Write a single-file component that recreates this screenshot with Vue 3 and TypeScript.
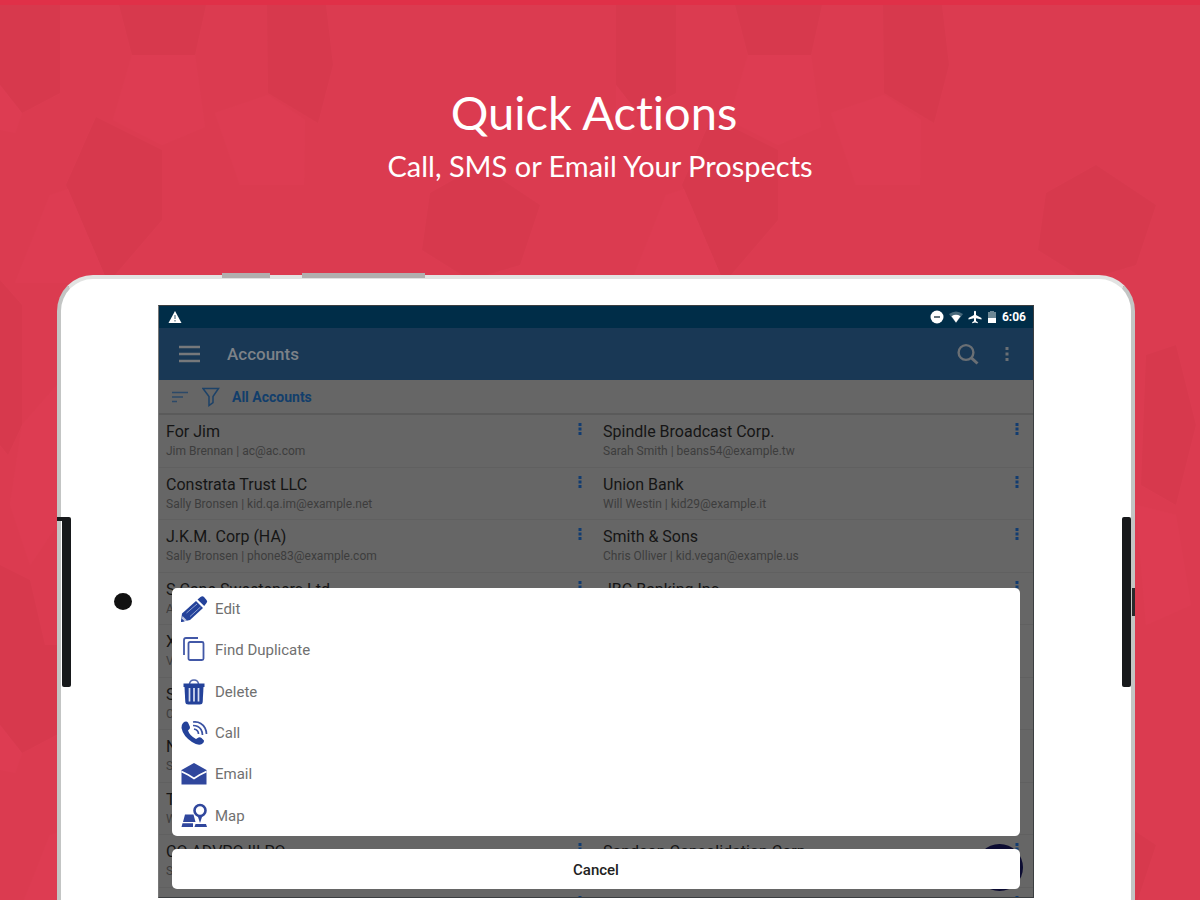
<script setup lang="ts">
import { ref } from 'vue'

interface Account {
  name: string
  detail: string
}

interface Action {
  id: string
  label: string
}

const accounts: Account[] = [
  { name: 'For Jim', detail: 'Jim Brennan | ac@ac.com' },
  { name: 'Spindle Broadcast Corp.', detail: 'Sarah Smith | beans54@example.tw' },
  { name: 'Constrata Trust LLC', detail: 'Sally Bronsen | kid.qa.im@example.net' },
  { name: 'Union Bank', detail: 'Will Westin | kid29@example.it' },
  { name: 'J.K.M. Corp (HA)', detail: 'Sally Bronsen | phone83@example.com' },
  { name: 'Smith & Sons', detail: 'Chris Olliver | kid.vegan@example.us' },
  { name: 'S Cane Sweeteners Ltd', detail: 'A' },
  { name: 'JBC Banking Inc', detail: '' },
  { name: 'X', detail: 'V' },
  { name: '', detail: '' },
  { name: 'S', detail: 'C' },
  { name: '', detail: '' },
  { name: 'N', detail: 'S' },
  { name: '', detail: '' },
  { name: 'T', detail: 'W' },
  { name: '', detail: '' },
  { name: 'CO ADVPO III PO', detail: 'S' },
  { name: 'Sandeon Consolidation Corp.', detail: '' },
  { name: 'Jungle Systems Incorporated', detail: '' },
  { name: 'Smith & Sons', detail: '' },
]

const actions: Action[] = [
  { id: 'edit', label: 'Edit' },
  { id: 'duplicate', label: 'Find Duplicate' },
  { id: 'delete', label: 'Delete' },
  { id: 'call', label: 'Call' },
  { id: 'email', label: 'Email' },
  { id: 'map', label: 'Map' },
]

const sheetOpen = ref(true)
</script>

<template>
  <main class="promo">
    <svg class="facets" aria-hidden="true">
      <defs>
        <pattern id="facet" width="616" height="640" patternUnits="userSpaceOnUse">
          <g fill="#d7394d">
            <path d="M0 0H60V88L22 108L0 80Z" />
            <path d="M119 0H206L195 50H132Z" />
            <path d="M267 0H326L333 60L318 118L268 88Z" />
            <path d="M96 112L162 145V215L108 278L66 180Z" />
            <path d="M430 188L480 160L540 200L520 260L470 275L422 245Z" />
            <path d="M0 275L22 300V420L8 450L0 440Z" />
            <path d="M530 350L560 340L580 420L560 500L525 480Z" />
            <path d="M0 560L30 575L45 640H0Z" />
          </g>
          <g fill="#dd3c52">
            <path d="M0 80L22 108L15 128L0 125Z" />
            <path d="M132 50H195L205 122L162 140L113 115Z" />
            <path d="M215 108L268 90L305 115L304 180H240Z" />
            <path d="M50 190L68 184L108 278L15 278Z" />
            <path d="M22 420L57 380V520L30 560L10 500Z" />
            <path d="M520 500L560 510L575 600L530 620Z" />
          </g>
        </pattern>
      </defs>
      <rect width="100%" height="100%" fill="url(#facet)" />
    </svg>

    <header class="hero">
      <h1>Quick Actions</h1>
      <p>Call, SMS or Email Your Prospects</p>
    </header>

    <section class="tablet">
      <span class="key key-short"></span>
      <span class="key key-long"></span>
      <span class="speaker speaker-left"></span>
      <span class="speaker speaker-right"></span>
      <span class="port"></span>
      <span class="camera"></span>

      <div class="screen">
        <div class="status">
          <svg width="14" height="14" viewBox="0 0 14 14"><path d="M7 1L13.500 13H.5Z" fill="#fff" /><path d="M7 5v4M7 10v1.500" stroke="#68808f" stroke-width="1.300" /></svg>
          <span class="spacer"></span>
          <svg width="14" height="14" viewBox="0 0 14 14"><circle cx="7" cy="7" r="6.500" fill="#fff" /><path d="M4 7h6" stroke="#53646f" stroke-width="1.800" /></svg>
          <svg width="14" height="14" viewBox="0 0 14 14"><path d="M0 4Q7-1 14 4L7 13Z" fill="#49697b" /><path d="M2.500 6.200Q7 3.500 11.500 6.200L7 12.500Z" fill="#fff" /></svg>
          <svg width="14" height="14" viewBox="0 0 14 14"><path d="M6 1.500Q7 0 8 1.500V5L13.500 8v1.500L8 8.300V11l1.800 1.200v1L7 12.500l-2.800.7v-1L6 11V8.300L.5 9.500V8L6 5Z" fill="#fff" /></svg>
          <svg width="10" height="14" viewBox="0 0 10 14"><path d="M1 2h2V1h4v1h2v6H1Z" fill="#6d8895" /><path d="M1 8h8v5H1Z" fill="#fff" /></svg>
          <time>6:06</time>
        </div>

        <div class="toolbar">
          <button type="button" class="icon-button menu" aria-label="Menu">
            <svg width="22" height="20" viewBox="0 0 22 20"><path d="M0 3h21M0 10h21M0 17h21" stroke="#76787b" stroke-width="2.600" /></svg>
          </button>
          <h2>Accounts</h2>
          <span class="spacer"></span>
          <button type="button" class="icon-button" aria-label="Search">
            <svg width="22" height="22" viewBox="0 0 22 22" fill="none" stroke="#6a6f74"><circle cx="9" cy="9.500" r="7.400" stroke-width="2.400" /><path d="M14.300 14.800L20.500 20.500" stroke-width="3" /></svg>
          </button>
          <button type="button" class="icon-button more" aria-label="More">
            <svg width="4" height="16" viewBox="0 0 4 16" fill="#6a6f74"><path d="M.5 1h3v3h-3zM.5 6.500h3v3h-3zM.5 12h3v3h-3z" /></svg>
          </button>
        </div>

        <div class="filter">
          <button type="button" class="icon-button" aria-label="Sort">
            <svg width="16" height="12" viewBox="0 0 16 12" stroke="#2c4968" stroke-width="1.500"><path d="M0 1.500h16M0 6h11M0 10.500h5" /></svg>
          </button>
          <button type="button" class="icon-button" aria-label="Filter">
            <svg width="18" height="20" viewBox="0 0 18 20" fill="none" stroke="#1d4268" stroke-width="1.500"><path d="M1 1.500h15.500L11 9.500v6L7 18.500v-9Z" /></svg>
          </button>
          <a href="#accounts">All Accounts</a>
        </div>

        <div class="list-view">
          <ul id="accounts" class="accounts">
            <li v-for="(account, i) in accounts" :key="i">
              <div class="text">
                <strong>{{ account.name }}</strong>
                <span>{{ account.detail }}</span>
              </div>
              <button type="button" class="icon-button" aria-label="Account actions">
                <svg width="4" height="14" viewBox="0 0 4 14" fill="#123c70"><path d="M.5 1h3v3h-3zM.5 5.500h3v3h-3zM.5 10h3v3h-3z" /></svg>
              </button>
            </li>
          </ul>
        </div>

        <button type="button" class="fab" aria-label="Add account"></button>

        <div v-if="sheetOpen" class="sheet">
          <ul class="actions">
            <li v-for="action in actions" :key="action.id">
              <button type="button">
                <svg v-if="action.id === 'edit'" width="28" height="28" viewBox="0 0 28 28">
                  <path d="M1 27L2 18.500L16 6L23 13L10 25Z" fill="#24429a" />
                  <path d="M17.500 4.500L20.500 2Q22.500 .5 24 2L26.500 5Q28 6.500 26.500 8L24.200 11Z" fill="#24429a" />
                  <path d="M6.500 18L17 9M10 21.500L20.500 12" stroke="#91a2d1" stroke-width="1" />
                  <path d="M2.500 21L7 25.500L4 26.200L1.800 24.200Z" fill="#fff" opacity=".7" />
                  <path d="M1 27l.6-3.500L4.500 26.300Z" fill="#24429a" />
                </svg>
                <svg v-else-if="action.id === 'duplicate'" width="28" height="28" viewBox="0 0 28 28" fill="none" stroke="#4258a7" stroke-width="1.800">
                  <path d="M4 19V4Q4 2 6 2H18" />
                  <rect x="8.500" y="6" width="15" height="18" rx="1.500" />
                </svg>
                <svg v-else-if="action.id === 'delete'" width="28" height="28" viewBox="0 0 28 28">
                  <path d="M9.500 6Q10 2 14 2T18.500 6" fill="none" stroke="#5267ac" stroke-width="1.600" />
                  <path d="M3.500 5.500h21v3.500h-21z" fill="#24429a" />
                  <path d="M4.500 9h19L22.700 24q-.2 2.500-3 2.500H8.300q-2.800 0-3-2.500Z" fill="#24429a" />
                  <path d="M9.500 10v13.500M14 10v13.500M18.500 10v13.500" stroke="#d7def1" stroke-width="1.700" />
                </svg>
                <svg v-else-if="action.id === 'call'" width="28" height="28" viewBox="0 0 28 28">
                  <path d="M3 4Q6 1.500 8 3.500L10 8Q10.500 9.500 8 11.500Q9.500 16.500 16 20L18.500 18.500Q20 17.700 21.500 19L24 21.500Q24.500 23 22 25Q18 27 12 23Q3 17 1.500 9Q1.200 6 3 4Z" fill="#24429a" />
                  <path d="M13 3Q21 2 25 9Q26.500 12 26.500 15M13 6.500Q18.500 6.500 21 10.500Q22.500 13 22.500 16M14 10Q18.500 11 18.500 15" fill="none" stroke="#3b53a3" stroke-width="1.700" />
                </svg>
                <svg v-else-if="action.id === 'email'" width="28" height="28" viewBox="0 0 28 28">
                  <path d="M1.500 10L14 3L26.500 10V24.500H1.500Z" fill="#30479d" />
                  <path d="M1.500 11.500L8.500 15L14 18.500L19.500 15L26.500 11.500" fill="none" stroke="#fff" stroke-width="1.700" />
                </svg>
                <svg v-else width="28" height="28" viewBox="0 0 28 28">
                  <path d="M5 12.500h8.500l2 7.500H3ZM2.500 21.200h10.500v3.800H1.500Z" fill="#30479d" />
                  <path d="M15.500 22h10.500l1 3H14.500Z" fill="#30479d" />
                  <circle cx="20" cy="8.500" r="5.500" fill="#fff" stroke="#30479d" stroke-width="2.600" />
                  <path d="M17.500 13.500h5L20 21Z" fill="#30479d" />
                </svg>
                <span>{{ action.label }}</span>
              </button>
            </li>
          </ul>
          <button type="button" class="cancel" @click="sheetOpen = false">Cancel</button>
        </div>
      </div>
    </section>
  </main>
</template>

<style>
body {
  margin: 0;
}
</style>

<style scoped>
.promo {
  position: relative;
  display: flex;
  flex-direction: column;
  min-height: 100vh;
  box-sizing: border-box;
  border-top: 5px solid #e03048;
  background: #db3b50;
  font-family: Roboto, "Liberation Sans", sans-serif;
  overflow: hidden;
}

.facets {
  position: absolute;
  inset: 0;
  width: 100%;
  height: 100%;
}

.hero {
  position: relative;
  box-sizing: border-box;
  height: 270px;
  padding-top: 77px;
  color: #fff;
  font-family: Lato, "Open Sans", sans-serif;
  font-variant-ligatures: none;
  text-align: center;
}

.hero h1 {
  margin: 0 12px 0 0;
  font-size: 47px;
  font-weight: 400;
  line-height: 60px;
}

.hero p {
  margin: 4px 0 0;
  font-size: 29px;
  line-height: 40px;
}

.tablet {
  position: relative;
  flex: 1;
  display: flex;
  margin: 0 65px 0 57px;
  padding: 26px 97px 2px;
  border: 4px solid #c3c5c4;
  border-top: 4px solid #e2e3e2;
  border-bottom: 0;
  border-radius: 36px 36px 0 0;
  background: #fff;
}

.key {
  position: absolute;
  top: -6px;
  height: 5px;
  background: #b1afae;
}

.key-short {
  left: 161px;
  width: 48px;
}

.key-long {
  left: 241px;
  width: 123px;
}

.speaker {
  position: absolute;
  top: 238px;
  width: 9px;
  height: 170px;
  border-radius: 2px;
  background: #17191b;
}

.speaker-left {
  left: 1px;
}

.speaker-left::before {
  content: "";
  position: absolute;
  left: -5px;
  width: 8px;
  height: 4px;
  background: #17191b;
}

.speaker-right {
  right: 0;
}

.port {
  position: absolute;
  top: 309px;
  right: -4px;
  width: 3px;
  height: 28px;
  background: #292a2c;
}

.camera {
  position: absolute;
  top: 314px;
  left: 53px;
  width: 18px;
  height: 17px;
  border-radius: 50%;
  background: #111;
}

.screen {
  position: relative;
  flex: 1;
  display: flex;
  flex-direction: column;
  box-sizing: border-box;
  border: 1px solid #3b3e40;
  border-left-color: #777;
  background: #666;
  overflow: hidden;
}

.status {
  display: flex;
  align-items: center;
  gap: 5px;
  height: 22px;
  padding: 0 7px 0 9px;
  background: #002d48;
  color: #fff;
  font-size: 12px;
  font-weight: 700;
}

.spacer {
  flex: 1;
}

.toolbar {
  display: flex;
  align-items: center;
  height: 52px;
  padding: 0 24px 0 20px;
  background: #193855;
}

.toolbar h2 {
  margin: 0 0 0 26px;
  color: #7d8288;
  font-size: 17px;
  font-weight: 500;
}

.toolbar .more {
  margin-left: 26px;
}

.icon-button {
  display: flex;
  padding: 0;
  border: 0;
  background: none;
}

.filter {
  display: flex;
  align-items: center;
  height: 33px;
  padding-left: 13px;
  border-bottom: 2px solid #5a5a5a;
}

.filter .icon-button + .icon-button {
  margin-left: 14px;
}

.filter a {
  margin-left: 12px;
  color: #123e6b;
  font-size: 14px;
  font-weight: 700;
  text-decoration: none;
}

.list-view {
  flex: 1 0 0;
  overflow: hidden;
}

.accounts {
  display: grid;
  grid-template-columns: 1fr 1fr;
  grid-template-rows: repeat(10, 1fr);
  height: 525px;
  margin: 0;
  padding: 0;
  list-style: none;
}

.accounts li {
  display: flex;
  align-items: flex-start;
  box-sizing: border-box;
  padding: 7px 14px 0 7px;
  border-bottom: 1px solid #606060;
}

.text {
  flex: 1;
  display: flex;
  flex-direction: column;
}

.text strong {
  height: 20px;
  color: #151515;
  font-size: 16px;
  font-weight: 400;
  line-height: 20px;
}

.text span {
  height: 18px;
  color: #3d3d3d;
  font-size: 12px;
  line-height: 18px;
}

.fab {
  position: absolute;
  right: 10px;
  bottom: 6px;
  width: 47px;
  height: 47px;
  padding: 0;
  border: 0;
  border-radius: 50%;
  background: #0c0c32;
}

.sheet {
  position: absolute;
  right: 13px;
  bottom: 8px;
  left: 13px;
  display: flex;
  flex-direction: column;
  gap: 13px;
}

.actions {
  display: grid;
  grid-template-rows: repeat(6, 1fr);
  height: 248px;
  margin: 0;
  padding: 0;
  border-radius: 5px;
  background: #fff;
  list-style: none;
}

.actions button {
  display: flex;
  align-items: center;
  gap: 7px;
  width: 100%;
  height: 100%;
  padding: 1px 8px 0;
  border: 0;
  background: none;
  color: #707070;
  font-family: inherit;
  font-size: 15px;
}

.cancel {
  height: 40px;
  padding: 2px 0 0;
  border: 0;
  border-radius: 5px;
  background: #fff;
  color: #222;
  font-family: inherit;
  font-size: 15px;
  font-weight: 500;
}
</style>
